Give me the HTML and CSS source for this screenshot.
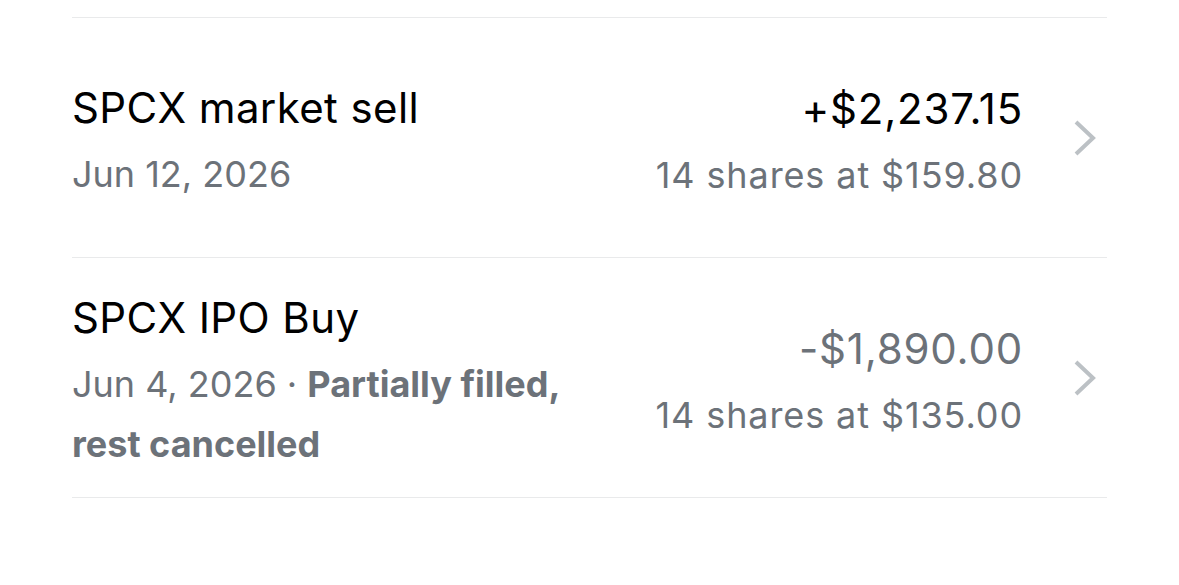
FILE: index.html
```html
<!DOCTYPE html>
<html lang="en">
<head>
    <meta charset="UTF-8">
    <meta name="viewport" content="width=device-width, initial-scale=1.0">
    <title>Orders</title>
    <link rel="stylesheet" href="styles.css">
</head>
<body>
    <div class="orders">
        <div class="order">
            <div class="order-info">
                <div class="order-title">SPCX market sell</div>
                <div class="order-sub">Jun 12, 2026</div>
            </div>
            <div class="order-amount">
                <div class="amount">+$2,237.15</div>
                <div class="order-sub">14 shares at $159.80</div>
            </div>
            <svg class="chevron" width="24" height="38" viewBox="0 0 24 38">
                <path d="M3 3 L20 19 L3 35" fill="none" stroke="#bcc1c5" stroke-width="4"/>
            </svg>
        </div>
        <div class="order">
            <div class="order-info">
                <div class="order-title">SPCX IPO Buy</div>
                <div class="order-sub">Jun 4, 2026 · <b>Partially filled, rest cancelled</b></div>
            </div>
            <div class="order-amount">
                <div class="amount muted">-$1,890.00</div>
                <div class="order-sub">14 shares at $135.00</div>
            </div>
            <svg class="chevron" width="24" height="38" viewBox="0 0 24 38">
                <path d="M3 3 L20 19 L3 35" fill="none" stroke="#bcc1c5" stroke-width="4"/>
            </svg>
        </div>
    </div>
</body>
</html>
```

FILE: styles.css
```css
body {
    margin: 0;
    background: #fff;
    font-family: Inter, "Noto Sans", sans-serif;
    color: #000;
}
.orders {
    margin: 17px 0 0 72px;
    width: 1035px;
    border-top: 1px solid #e9eaeb;
}
.order {
    display: flex;
    align-items: center;
    height: 239px;
    border-bottom: 1px solid #e9eaeb;
}
.order-info {
    flex: 1;
    max-width: 500px;
    padding-top: 9px;
}
.order-title {
    font-size: 42px;
    line-height: 56px;
    margin-bottom: 8px;
    letter-spacing: 0.4px;
}
.order-sub {
    font-size: 36px;
    line-height: 60px;
    color: #6c7279;
}
.order-sub b {
    font-weight: 700;
}
.order-amount {
    margin-left: auto;
    text-align: right;
    padding-top: 8px;
}
.order-amount .order-sub {
    letter-spacing: 0.9px;
}
.amount {
    font-size: 42px;
    line-height: 60px;
    margin-bottom: 6px;
    letter-spacing: 0.8px;
}
.amount.muted {
    color: #6c7279;
}
.chevron {
    margin: 0 10px 0 50px;
}
```
